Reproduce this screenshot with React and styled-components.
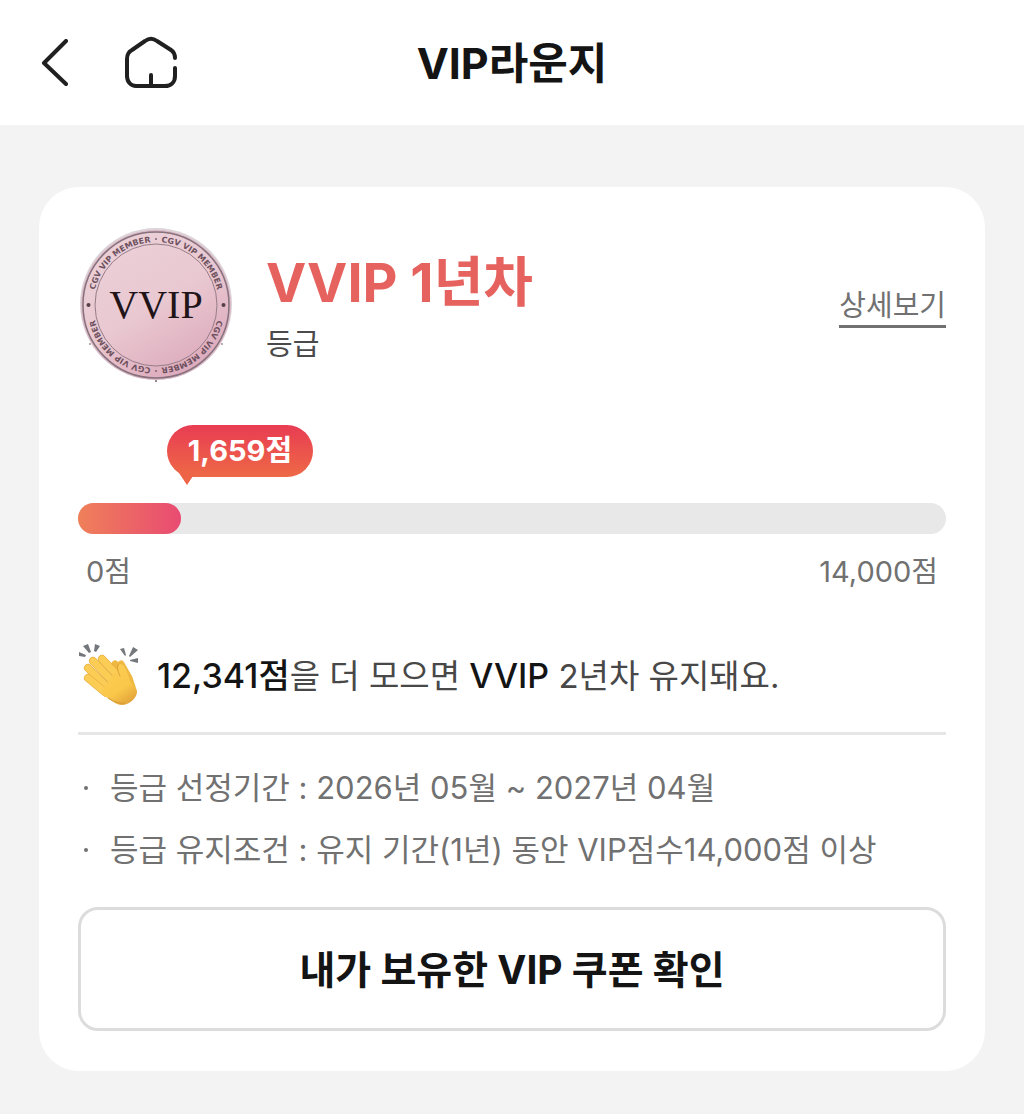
import React from 'react'
import styled, { createGlobalStyle } from 'styled-components'

const POINTS = 1659
const GOAL = 14000

const format = n => n.toLocaleString('en-US')

// rotation and place on the ring for each of the four labels
const RING_LABELS = [
  [0, '13.75%'],
  [90, '11.25%'],
  [180, '13.75%'],
  [270, '11.25%']
]

const FINGERS = [
  'M24 15l17 18',
  'M15 17l20 21',
  'M10 24l20 20',
  'M10 34l18 15'
]

const Seal = () => (
  <SealSvg viewBox="0 0 156 156" role="img" aria-label="VVIP">
    <defs>
      <linearGradient id="sealFill" x1="0.2" y1="0" x2="0.8" y2="1">
        <stop offset="0" stopColor="#ebd0d8" />
        <stop offset="0.5" stopColor="#e9c8d1" />
        <stop offset="1" stopColor="#dba6b9" />
      </linearGradient>
      <path id="sealRing" d="M15 78a63 63 0 1 1 126 0a63 63 0 1 1 -126 0" />
    </defs>
    <circle cx="78" cy="77" r="76" fill="#dcd4d9" />
    <circle cx="78" cy="78" r="75" fill="#dcb9c6" />
    <circle cx="78" cy="78" r="73" fill="url(#sealFill)" stroke="#86717c" strokeWidth="1.5" />
    <circle cx="78" cy="78" r="61" fill="none" stroke="#967d88" strokeWidth="1" />
    {RING_LABELS.map(([angle, offset]) => (
      <g key={angle} transform={`rotate(${angle} 78 78)`}>
        <RingText>
          <textPath href="#sealRing" startOffset={offset}>CGV VIP MEMBER</textPath>
        </RingText>
      </g>
    ))}
    <circle cx="10.5" cy="78" r="2" fill="#563f49" />
    <circle cx="145.5" cy="78" r="2" fill="#563f49" />
    <circle cx="78" cy="12" r="1" fill="#806470" />
    <circle cx="78" cy="144" r="1" fill="#806470" />
    <circle cx="78" cy="154" r="1" fill="#71616a" />
    <circle cx="12" cy="117" r="1" fill="#a58d99" />
    <circle cx="144" cy="117" r="1" fill="#a58d99" />
    <SealText x="78" y="91">VVIP</SealText>
  </SealSvg>
)

const Clap = () => (
  <ClapSvg viewBox="0 0 62 64" aria-hidden="true">
    <defs>
      <linearGradient id="palm" x1="0.2" y1="0" x2="0.8" y2="1">
        <stop offset="0" stopColor="#fbcd55" />
        <stop offset="0.6" stopColor="#fac84a" />
        <stop offset="1" stopColor="#e0a038" />
      </linearGradient>
    </defs>
    <g fill="#74777b">
      <path d="M1 8l7 3-1 2-6-1z" />
      <path d="M5 2l5-2 3 8-2 1z" />
      <path d="M17 0l5 2-4 6-2-1z" />
      <path d="M42 5l4-1 2 7-1 1z" />
      <path d="M55 3l5 3-8 7-1-1z" />
      <path d="M60 14v5l-8-2v-1z" />
    </g>
    <g fill="none" stroke="#efb843" strokeWidth="7" strokeLinecap="round">
      <path d="M37 20l10 12" />
      <path d="M43 20l8 14 4 12" />
    </g>
    {FINGERS.map(d => (
      <g key={d} fill="none" strokeLinecap="round">
        <path d={d} stroke="#dfa238" strokeWidth="8" />
        <path d={d} stroke="#fbcd55" strokeWidth="7" />
      </g>
    ))}
    <path
      d="M37 28l5 4c-2-5-4-11 0-12 5 0 7 8 9 14 1 6 8 9 8 14 0 6-8 13-15 13-6 0-11-5-17-9l-4-4z"
      fill="url(#palm)"
    />
    <path d="M42 32c-2-4-4-10-1-12" fill="none" stroke="#dba138" strokeWidth="1" strokeLinecap="round" />
    <path d="M30 54c6 4 11 6 16 5" fill="none" stroke="#d39533" strokeWidth="1" strokeLinecap="round" />
  </ClapSvg>
)

const App = () => (
  <>
    <GlobalStyle />
    <Header>
      <HeaderNav>
        <IconButton type="button" aria-label="뒤로">
          <svg width="28" height="48" viewBox="0 0 28 48">
            <path d="M26 2L4 24l22 21" />
          </svg>
        </IconButton>
        <IconButton type="button" aria-label="홈">
          <svg width="54" height="54" viewBox="0 0 54 54">
            <path d="M51 22c0-4-1-6-4-8L33 5c-4-3-8-3-12 0L8 14c-4 2-5 5-5 9v17c0 6 4 10 9 10h29c6 0 10-4 10-10v-8" />
            <path d="M27 50V39" />
          </svg>
        </IconButton>
      </HeaderNav>
      <PageTitle>VIP라운지</PageTitle>
    </Header>

    <Main>
      <Card>
        <Grade>
          <Seal />
          <GradeInfo>
            <GradeName>VVIP 1년차</GradeName>
            <GradeLabel>등급</GradeLabel>
          </GradeInfo>
          <DetailLink href="#detail">상세보기</DetailLink>
        </Grade>

        <Bubble style={{ marginLeft: `calc(${POINTS / GOAL * 100}% - 14px)` }}>
          {format(POINTS)}점
        </Bubble>
        <Track role="progressbar" aria-label="VIP점수" aria-valuenow={POINTS} aria-valuemin={0} aria-valuemax={GOAL}>
          <Fill style={{ width: `${POINTS / GOAL * 100}%` }} />
        </Track>
        <Scale>
          <span>0점</span>
          <span>{format(GOAL)}점</span>
        </Scale>

        <Message>
          <Clap />
          <p><b>{format(GOAL - POINTS)}점</b>을 더 모으면 <b>VVIP</b> 2년차 유지돼요.</p>
        </Message>

        <Conditions>
          <li>등급 선정기간 : 2026년 05월 ~ 2027년 04월</li>
          <li>등급 유지조건 : 유지 기간(1년) 동안 VIP점수14,000점 이상</li>
        </Conditions>

        <CouponButton type="button">내가 보유한 VIP 쿠폰 확인</CouponButton>
      </Card>
    </Main>
  </>
)

const GlobalStyle = createGlobalStyle`
  * {
    box-sizing: border-box;
  }

  body {
    margin: 0;
    background: #f3f3f3;
    color: #141414;
    font-family: Inter, "Noto Sans CJK KR", sans-serif;
  }

  h1, h2, p, ul {
    margin: 0;
    padding: 0;
  }

  button {
    font-family: inherit;
    color: inherit;
    cursor: pointer;
  }
`

const Header = styled.header`
  display: grid;
  grid-template-columns: 1fr auto 1fr;
  align-items: center;
  height: 125px;
  padding: 0 40px;
  background: #fff;
`

const HeaderNav = styled.nav`
  display: flex;
  align-items: center;
  gap: 56px;
`

const IconButton = styled.button`
  display: flex;
  padding: 0;
  border: none;
  background: none;

  path {
    fill: none;
    stroke: #202020;
    stroke-width: 4;
    stroke-linecap: round;
    stroke-linejoin: round;
  }
`

const PageTitle = styled.h1`
  font-size: 43px;
  line-height: 60px;
  font-weight: 700;
`

const Main = styled.main`
  padding: 62px 39px 43px;
`

const Card = styled.section`
  padding: 40px 39px;
  border-radius: 40px;
  background: #fff;
`

const Grade = styled.div`
  display: flex;
  align-items: center;
  gap: 32px;
`

const SealSvg = styled.svg`
  flex: none;
  width: 156px;
  height: 156px;
`

const RingText = styled.text`
  fill: #6d515e;
  font-family: "DejaVu Sans", sans-serif;
  font-size: 8px;
  font-weight: 700;
  text-anchor: middle;
`

const SealText = styled.text`
  fill: #211419;
  font-family: "Liberation Serif", serif;
  font-size: 40px;
  text-anchor: middle;
`

const GradeInfo = styled.div`
  flex: 1;
  padding-top: 8px;
`

const GradeName = styled.h2`
  color: #e5625e;
  font-size: 54px;
  line-height: 68px;
  font-weight: 700;
`

const GradeLabel = styled.p`
  margin-top: 4px;
  color: #4a4a4a;
  font-size: 29px;
  line-height: 48px;
`

const DetailLink = styled.a`
  padding-top: 4px;
  border-bottom: 3px solid #717171;
  color: #717171;
  font-size: 29px;
  line-height: 38px;
  text-decoration: none;
`

const Bubble = styled.div`
  position: relative;
  width: fit-content;
  margin-top: 42px;
  padding: 0 21px;
  border-radius: 26px;
  background: linear-gradient(#e83c53, #ee6946);
  color: #fff;
  font-size: 29px;
  line-height: 52px;
  font-weight: 700;

  &::after {
    content: '';
    position: absolute;
    top: 48px;
    left: 12px;
    border: 8px solid transparent;
    border-top: 12px solid #ed6447;
    border-bottom: none;
  }
`

const Track = styled.div`
  height: 31px;
  margin-top: 26px;
  border-radius: 16px;
  background: #e8e8e8;
`

const Fill = styled.div`
  height: 100%;
  border-radius: 16px;
  background: linear-gradient(90deg, #ef8059, #e94b72);
`

const Scale = styled.div`
  display: flex;
  justify-content: space-between;
  padding: 14px 8px 0;
  color: #717171;
  font-size: 29px;
  line-height: 48px;
`

const Message = styled.div`
  display: flex;
  align-items: center;
  gap: 17px;
  margin-top: 48px;
  padding-bottom: 24px;
  border-bottom: 3px solid #e6e6e6;
  color: #484848;
  font-size: 33px;
  line-height: 48px;

  b {
    color: #141414;
    font-size: 34px;
    font-weight: 500;
  }
`

const ClapSvg = styled.svg`
  flex: none;
  width: 62px;
  height: 64px;
`

const Conditions = styled.ul`
  margin-top: 22px;
  list-style: none;
  color: #717171;
  font-size: 31px;
  line-height: 62px;

  li {
    display: flex;
    align-items: center;
    gap: 22px;
    padding-left: 6px;
  }

  li::before {
    content: '';
    width: 4px;
    height: 4px;
    border-radius: 50%;
    background: #717171;
  }
`

const CouponButton = styled.button`
  width: 100%;
  margin-top: 26px;
  padding: 31px 0 29px;
  border: 3px solid #dcdcdc;
  border-radius: 20px;
  background: #fff;
  font-size: 39px;
  line-height: 58px;
  font-weight: 700;
`

export default App
